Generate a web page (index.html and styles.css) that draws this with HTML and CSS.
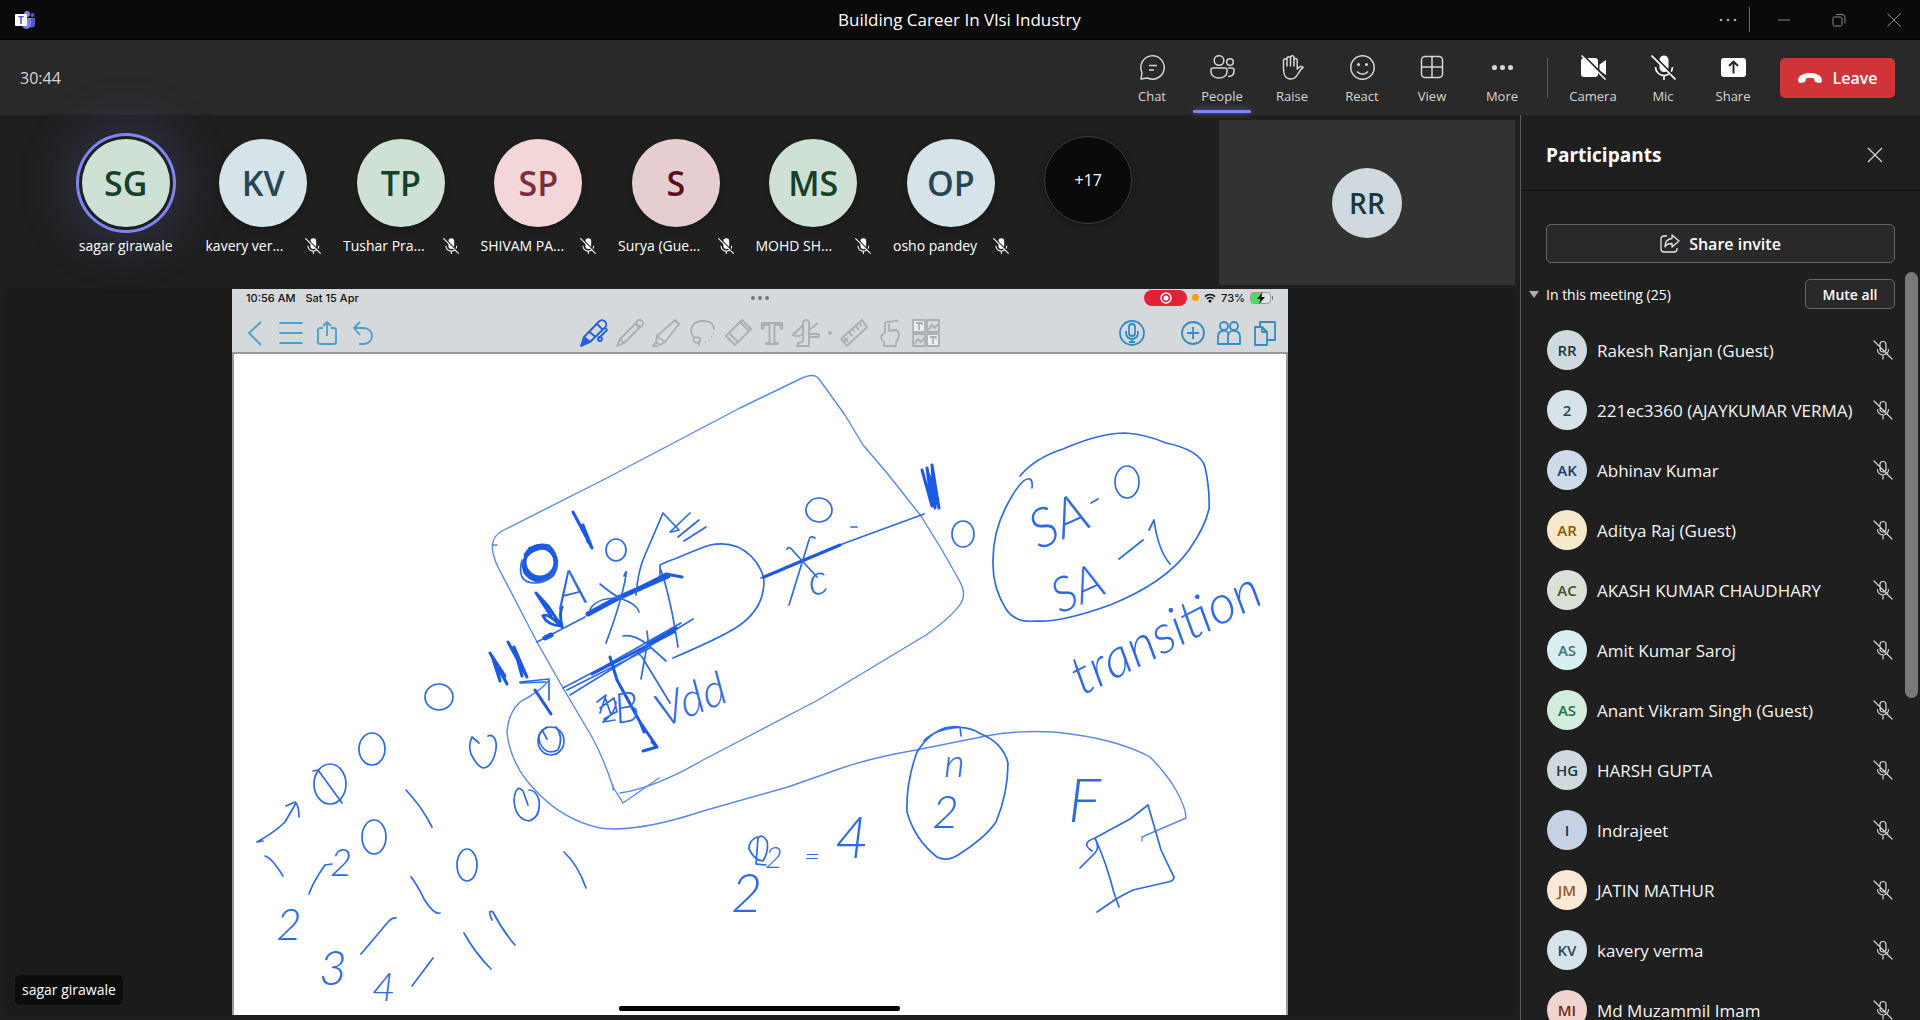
FILE: index.html
```html
<!DOCTYPE html>
<html lang="en">
<head>
    <meta charset="UTF-8">
    <meta name="viewport" content="width=device-width, initial-scale=1.0">
    <title>Building Career In Vlsi Industry</title>
    <link rel="stylesheet" href="styles.css">
</head>
<body>
    <svg class="sprite" aria-hidden="true">
      <symbol id="mic-off" viewBox="0 0 20 20">
        <path d="M7 5.5V4.5a3 3 0 0 1 6 0V9a3 3 0 0 1-6 0zM4.5 9.5a5.5 5.5 0 0 0 11 0M10 15v4M1 1l18 18" fill="none" stroke="currentColor" stroke-width="1.2" stroke-linecap="round" />
      </symbol>
      <symbol id="mic-off-filled" viewBox="0 0 25 25">
        <path d="M8.5 5a4.5 4.5 0 0 1 9 0v7.5a4.5 4.5 0 0 1-9 0z" fill="currentColor" />
        <path d="M4.5 12a8.5 8.5 0 0 0 17 0M13 20.5V25" fill="none" stroke="currentColor" stroke-width="1.6" />
        <path d="M2.5 .5l23 23" stroke="#232323" stroke-width="2" />
        <path d="M.5 .5l24 24" stroke="currentColor" stroke-width="1.6" />
      </symbol>
    </svg>

    <header class="titlebar">
      <svg class="logo" viewBox="0 0 20 18" aria-label="Teams">
        <circle cx="17.5" cy="4" r="2" fill="#5059c9" />
        <path d="M13 7h7v6a3.5 3.5 0 0 1-7 0z" fill="#5059c9" />
        <circle cx="12" cy="3" r="3" fill="#7b83eb" />
        <path d="M7 7h9v6a4.5 5 0 0 1-9 0z" fill="#7b83eb" />
        <rect y="3" width="12" height="12" rx="1" fill="#fff" />
        <text x="6" y="12.5" class="logo-letter">T</text>
      </svg>
      <h1 class="titlebar-title">Building Career In Vlsi Industry</h1>
      <div class="window-buttons">
        <button class="window-more" aria-label="Settings"><svg viewBox="0 0 20 20"><circle cx="3" cy="10" r="1.3" /><circle cx="10" cy="10" r="1.3" /><circle cx="17" cy="10" r="1.3" /></svg></button>
        <button aria-label="Minimize"><svg viewBox="0 0 20 20"><path d="M4 10h12" /></svg></button>
        <button aria-label="Restore"><svg viewBox="0 0 20 20"><rect x="4" y="7" width="9" height="9" rx="1.5" /><path d="M7 4.5h6a3 3 0 0 1 3 3v6" /></svg></button>
        <button aria-label="Close"><svg viewBox="0 0 20 20"><path d="M3.5 3.5l13 13M16.5 3.5l-13 13" /></svg></button>
      </div>
    </header>

    <nav class="toolbar">
      <span class="timer">30:44</span>
      <div class="tool-group">
        <button class="tool">
          <svg viewBox="0 0 25 25"><path d="M1 24l1-6.5A11.7 11.7 0 1 1 7.5 23zM9 10.5h8M9 15h5" /></svg>
          <span>Chat</span>
        </button>
        <button class="tool active">
          <svg viewBox="0 0 25 25"><circle cx="9" cy="5.5" r="4.8" /><circle cx="20" cy="7" r="3.3" /><path d="M3 13h12a2 2 0 0 1 2 2v2c0 4-4 6-8 6s-8-2-8-6v-2a2 2 0 0 1 2-2zM18 13h4a2 2 0 0 1 2 2v1c0 4-3 5.5-6 5.5" /></svg>
          <span>People</span>
        </button>
        <button class="tool">
          <svg viewBox="0 0 25 25"><path d="M3.500 13V5.500a1.700 1.700 0 0 1 3.500 0V11 3.500a1.700 1.700 0 0 1 3.500 0V11 2.500a1.700 1.700 0 0 1 3.500 0V11 5a1.600 1.600 0 0 1 3.200 0v9c2-2.500 5-3.500 6-1.500-2 1-3.500 3-5 6s-3.200 5.500-7.200 5.500c-6 0-7.500-4-7.500-11z" /></svg>
          <span>Raise</span>
        </button>
        <button class="tool">
          <svg viewBox="0 0 25 25"><circle cx="12.5" cy="12.5" r="11.7" /><path d="M7 16.5c3 3.5 8 3.5 11 0" /><circle class="solid" cx="8.5" cy="9.5" r=".8" /><circle class="solid" cx="16.5" cy="9.5" r=".8" /></svg>
          <span>React</span>
        </button>
        <button class="tool">
          <svg viewBox="0 0 25 25"><rect x="1.5" y="1.5" width="21" height="21" rx="3.5" /><path d="M12 1.5v21M1.500 12h21" /></svg>
          <span>View</span>
        </button>
        <button class="tool">
          <svg viewBox="0 0 25 25"><circle class="solid" cx="4.5" cy="12.5" r="1.8" /><circle class="solid" cx="12.5" cy="12.5" r="1.8" /><circle class="solid" cx="20.5" cy="12.5" r="1.8" /></svg>
          <span>More</span>
        </button>
      </div>
      <div class="tool-group devices">
        <button class="tool">
          <svg viewBox="0 0 25 25"><path class="fill" d="M3 3h11a3 3 0 0 1 3 3v13a3 3 0 0 1-3 3H3a3 3 0 0 1-3-3V6a3 3 0 0 1 3-3zM18.500 9.500L25 5v15l-6.500-4.500z" /><path class="cut" d="M2.500 .5l23 23" /><path class="white" d="M.5 .5l24 24" /></svg>
          <span>Camera</span>
        </button>
        <button class="tool">
          <svg class="bare"><use href="#mic-off-filled" /></svg>
          <span>Mic</span>
        </button>
        <button class="tool">
          <svg viewBox="0 0 25 25"><rect class="fill" y="3" width="25" height="19" rx="3" /><path class="dark" d="M12.5 18.5V7M8 11l4.500-4.500L17 11" /></svg>
          <span>Share</span>
        </button>
      </div>
      <button class="leave">
        <svg viewBox="0 0 24 12"><path d="M12 1c6 0 11 2.500 11.800 6 .4 2-.4 4.300-2.200 4L18 10.200c-1-.2-1.500-1-1.600-2l-.2-1.700c-3-1-5.400-1-8.400 0L7.600 8.200c-.1 1-.6 1.800-1.600 2l-3.600.8C.6 11.300-.2 9 .2 7 1 3.500 6 1 12 1z" /></svg>
        Leave
      </button>
    </nav>

    <div class="layout">
      <main class="meeting">
        <section class="strip">
          <ul class="people">
            <li class="person speaking"><span class="avatar green">SG</span><div class="label"><span>sagar girawale</span></div></li>
            <li class="person"><span class="avatar blue">KV</span><div class="label"><span>kavery ver...</span><svg><use href="#mic-off-filled" /></svg></div></li>
            <li class="person"><span class="avatar green">TP</span><div class="label"><span>Tushar Pra...</span><svg><use href="#mic-off-filled" /></svg></div></li>
            <li class="person"><span class="avatar pink">SP</span><div class="label"><span>SHIVAM PA...</span><svg><use href="#mic-off-filled" /></svg></div></li>
            <li class="person"><span class="avatar rose">S</span><div class="label"><span>Surya (Gue...</span><svg><use href="#mic-off-filled" /></svg></div></li>
            <li class="person"><span class="avatar green">MS</span><div class="label"><span>MOHD SH...</span><svg><use href="#mic-off-filled" /></svg></div></li>
            <li class="person"><span class="avatar blue">OP</span><div class="label"><span>osho pandey</span><svg><use href="#mic-off-filled" /></svg></div></li>
            <li class="person more"><button class="avatar">+17</button></li>
          </ul>
          <div class="self"><span class="avatar slate">RR</span></div>
        </section>

        <section class="stage">
          <div class="tablet">
            <div class="status">
              <div class="status-left"><span>10:56 AM</span><span>Sat 15 Apr</span></div>
              <svg class="dots" viewBox="0 0 20 6"><circle cx="3" cy="3" r="2" /><circle cx="10" cy="3" r="2" /><circle cx="17" cy="3" r="2" /></svg>
              <div class="status-right">
                <span class="recording"><svg viewBox="0 0 12 12"><circle cx="6" cy="6" r="5" fill="none" stroke="#fff" stroke-width="1.5" /><circle cx="6" cy="6" r="2.5" fill="#fff" /></svg></span>
                <span class="orange-dot"></span>
                <svg class="wifi" viewBox="0 0 13 10"><path d="M1 3.5c3-3 8-3 11 0M3 6c2-2 5-2 7 0" fill="none" stroke="#111" stroke-width="1.8" /><circle cx="6.5" cy="8.5" r="1.5" /></svg>
                <span>73%</span>
                <svg class="battery" viewBox="0 0 24 12"><rect x=".5" y=".5" width="20" height="11" rx="3" fill="#dfe3e4" stroke="#999" /><path d="M3.500 1H11v10H3.500A2.500 2.500 0 0 1 1 8.500v-5A2.500 2.500 0 0 1 3.500 1z" fill="#4cd964" /><path d="M12.500 0L7 7h3.500L9 12l6-7h-3.500z" fill="#111" /><path d="M22.500 4v4" stroke="#777" /></svg>
              </div>
            </div>

            <div class="note-tools">
              <div class="note-left">
                <button aria-label="Back"><svg viewBox="0 0 26 28"><path d="M19 3L7 14l12 12" /></svg></button>
                <button aria-label="Menu"><svg viewBox="0 0 26 28"><path d="M1.500 4h23M1.500 14h23M1.500 24h23" /></svg></button>
                <button aria-label="Export"><svg viewBox="0 0 26 28"><path d="M9 9H6a2 2 0 0 0-2 2v12a2 2 0 0 0 2 2h14a2 2 0 0 0 2-2V11a2 2 0 0 0-2-2h-3M13 17V3M9 7l4-4 4 4" /></svg></button>
                <button aria-label="Undo"><svg viewBox="0 0 26 28"><path d="M10 3L4 9l6 7M4 9h10a8 8 0 0 1 0 16H9" /></svg></button>
              </div>
              <div class="note-pens">
                <button class="selected" aria-label="Pen"><svg viewBox="0 0 28 28"><path d="M1 27l3-9L19 2.500a4 4 0 0 1 6 6L10 23zM4 18l6 5M9 12.500l6 5M17 5l5.500 5.500M25 8l2 3-8 8" /><path d="M2 26l3-6 4 3z" fill="#1f5fe0" /><circle cx="20" cy="20" r="2" /></svg></button>
                <button aria-label="Pencil"><svg viewBox="0 0 28 28"><path d="M1 27l3-7L20 4l4 4L8 24zM4 20l4 4" /><circle cx="23.5" cy="4.5" r="3.5" /></svg></button>
                <button aria-label="Highlighter"><svg viewBox="0 0 28 28"><path d="M5 17L23 1l4 4-14 18zM5 17l-1 6 4 3 5-3M4 23l-3 4h5" /></svg></button>
                <button aria-label="Lasso"><svg viewBox="0 0 28 28"><path d="M6 19C-1 9 6 2 15 2c8 0 11 4 11 8M6 19c2-2 8 0 6 3s-8 2-6-3zM11 23v4" /><path d="M26 10c0 7-6 13-12 14" stroke-dasharray="1 3" /></svg></button>
                <button aria-label="Eraser"><svg viewBox="0 0 28 28"><path d="M2 17L18 1l9 9-16 16zM5 14l9 9M16 3l9 9" /></svg></button>
                <button class="text-tool" aria-label="Text"><svg viewBox="0 0 24 28"><text x="12" y="25">T</text></svg></button>
                <button aria-label="Tools"><svg viewBox="0 0 28 28"><path d="M11 22V4a3 3 0 0 1 6 0v23H5c0-3 2-4 6-4M11 6L1 16c3 2 7 1 10-1M17 11l9-7M17 15h8c3 0 3 3 0 3h-8" /></svg></button>
                <i class="pen-dot"></i>
                <button aria-label="Ruler"><svg viewBox="0 0 28 28"><path d="M1 20L22 1l5 7L7 27zM9 13l3 4M12.500 10l2 3M16 7l3 4M19.500 4l2 3" /><circle cx="6" cy="21" r="1.5" /></svg></button>
                <button aria-label="Touch"><svg viewBox="0 0 28 28"><path d="M9 14V5c0-4 5-1 9-3 2-1 3-1 4 1M9 14c-5 2-5 6-1 9v4h12v-4c4-4 4-12-1-12l-6 1V5" /></svg></button>
                <button aria-label="Shapes"><svg viewBox="0 0 28 28"><path d="M1 1h12v12H1zM15 15h12v12H15z" fill="#eee" /><path d="M15 1h12v12H15zM1 15h12v12H1zM16 11l4-5 3 3 3-4M2 25l4-5 3 3 3-4M4 4h6v2M7 4v7M18 18h6v2M21 18v7" /></svg></button>
              </div>
              <div class="note-right">
                <button class="dictate" aria-label="Record audio"><svg viewBox="0 0 26 28"><circle cx="13" cy="14" r="12" /><path d="M10 8a3 3 0 0 1 6 0v6a3 3 0 0 1-6 0zM7 12v2a6 6 0 0 0 12 0v-2M13 20v3M10 23h6" /></svg></button>
                <button aria-label="Add"><svg viewBox="0 0 26 28"><circle cx="13" cy="14" r="11" /><path d="M13 8v12M7 14h12" /></svg></button>
                <button aria-label="Collaborate"><svg viewBox="0 0 26 28"><circle cx="8" cy="7" r="4" /><circle cx="18" cy="7" r="4" /><path d="M13 16c-1-6-11-6-11 2v7h10V16c1-6 12-6 12 2v7H12" /></svg></button>
                <button aria-label="Pages"><svg viewBox="0 0 26 28"><path d="M3 8h7l5 5v13H3zM10 8v5h5M8 8V3h15v18h-8" /></svg></button>
              </div>
            </div>

            <svg class="board" viewBox="232 354 1056 661" preserveAspectRatio="xMidYMin meet" role="img" aria-label="Shared whiteboard">
              <!-- package outline -->
              <g class="thin">
                <path d="M603 480L740 408L800 379Q814 372 819 379L845 415L863 445L887 473L921 516L942 550L959 580Q967 594 961 603Q953 616 926 635L818 700L703 760Q655 788 620 793" />
                <path d="M603 480L502 531Q490 537 493 553Q495 562 499 569L537 642L563 688L592 737Q603 757 613 787L623 803L659 778M492 545h5M613 785v5" />
                <path d="M549 680Q542 690 520 702Q508 713 507 733Q511 766 536 791Q563 820 600 828Q637 833 703 811L788 787L839 769Q870 758 916 750L986 736Q1015 730 1054 732Q1115 738 1150 757Q1166 773 1176 790Q1186 808 1186 818L1142 837v4" />
              </g>
              <!-- AND gate -->
              <path d="M660 575V565Q668 561 677 558Q703 547 710 545Q735 540 751 556Q764 570 764 583Q763 610 737 627Q722 637 673 658M661 570Q671 600 678 647" />
              <path d="M537 642L585 617M761 578L803 560L845 543L924 514M563 688L603 667L681 623M570 695L693 619M567 690L650 648M590 612L665 578" />
              <path class="thick" d="M545 638L551 635M588 614L618 598L668 576" />
              <path class="mid" d="M610 603L666 574L682 577M592 674L674 632M764 577L840 545M648 644L676 628" />
              <path d="M600 584Q613 595 622 599Q637 604 639 612M624 576q3-8 2-1Q622 600 606 643M590 610Q595 598 618 598M623 636Q633 634 647 644L666 661M647 631L648 640L641 679" />
              <path d="M787 549q2-4 7 3L817 577M815 538q-5-3-6 2L789 605M636 595Q638 570 645 555L663 513L679 530l-8 2M670 532L690 513M678 537L699 520M684 541L706 527M638 653L642 657L670 703" />
              <path class="mid" d="M610 657L617 680L640 722L657 747L643 751M640 722l4 10M652 742l5 5" />
              <!-- scribbled marks -->
              <ellipse class="mid" cx="540" cy="562" rx="15" ry="15" />
              <path class="mid" d="M525 555Q533 542 549 546Q562 560 553 575Q538 588 525 573Q520 560 531 552Q547 542 556 558M530 548Q520 562 528 574Q541 586 555 569Q558 551 541 547" />
              <path d="M522 560Q516 583 535 583Q553 582 557 563" />
              <path class="mid" d="M573 512L592 548L583 525L588 542M536 593L548 606L562 627M536 593L551 616M562 607q-3 6 0 20M543 616q4-4 18 10q-14-1-18-10M490 653L507 684L496 663L500 681L492 656L505 676M508 642L527 677L514 647L522 676M535 690L551 714" />
              <path d="M597 702L606 695L600 713M605 697L611 715M600 708L614 698L617 712M603 722Q616 712 616 702M603 722l12-2M604 719l12-7" />
              <path class="mid" d="M922 470L932 506L927 468L935 508L932 465L939 508L929 475L936 500" />
              <path d="M520 682L549 679V700M520 683L546 682M851 527h6" />
              <ellipse cx="616" cy="550" rx="10" ry="11" />
              <ellipse cx="551" cy="741" rx="13" ry="14" />
              <path d="M547 727Q536 733 540 743Q546 756 558 750Q564 737 556 727M542 730l5 9" />
              <ellipse cx="819" cy="510" rx="13" ry="12" />
              <ellipse cx="963" cy="534" rx="11" ry="13" />
              <ellipse cx="439" cy="697" rx="14" ry="13" />
              <ellipse cx="372" cy="749" rx="13" ry="16" />
              <ellipse cx="330" cy="784" rx="16" ry="20" />
              <ellipse cx="374" cy="837" rx="12" ry="17" />
              <ellipse cx="467" cy="865" rx="10" ry="16" />
              <path d="M479 743L472 737Q468 745 471 754Q478 768 484 768Q490 767 494 757Q498 746 495 739Q492 734 488 736M528 805L523 791Q516 783 514 800Q515 819 529 821Q541 817 539 800Q536 790 529 790" />
              <!-- truth table strokes -->
              <path d="M313 771L318 770L342 803M257 842Q275 832 285 822L296 803M286 806L295 802Q299 805 299 817M257 842l6-1M265 856Q272 858 283 876M406 790Q422 807 432 827M309 894Q313 882 325 865M325 865l7-1M411 877Q418 886 424 899Q434 915 440 913M361 954L388 922Q393 917 396 918M564 852Q578 865 586 888M464 933Q475 953 491 969M492 920Q487 909 493 912Q502 930 515 945M412 986L433 958" />
              <!-- stuck-at bubble -->
              <path d="M1020 476Q1035 458 1063 449Q1100 433 1125 433Q1145 434 1166 443Q1200 450 1205 467Q1210 490 1209 509Q1205 527 1189 550Q1165 583 1110 605Q1060 623 1035 621Q1015 623 1006 609Q992 587 993 560Q993 532 1006 507Q1022 476 1030 479Q1033 481 1032 488M1091 503l7-4M1119 559L1143 540M1149 530l5-10Q1158 550 1170 564" />
              <ellipse cx="1127" cy="482" rx="12" ry="16" />
              <!-- power of two bubble, flip-flop box -->
              <path d="M961 736L960 727Q935 724 917 752Q906 782 907 812Q915 840 937 857Q947 862 958 855Q985 838 996 822Q1008 793 1008 763Q1003 743 981 734Q966 724 947 729Q930 733 924 741" />
              <path d="M1095 838L1130 819L1148 805L1161 850Q1168 865 1174 877Q1174 881 1168 882L1133 890Q1123 895 1116 899L1097 912M1096 840Q1107 865 1114 893L1119 907M1092 851Q1080 843 1095 838Q1100 848 1095 853L1080 868" />
              <path d="M757 837q-8 3-8 12q6 12 14 12q6-10 4-20q-5-8-9-3l-2 26l10 1" />

              <g class="ink-text">
                <text x="560" y="609" font-size="50" transform="rotate(-14 560 609)">A</text>
                <text x="617" y="724" font-size="42" transform="rotate(-10 617 724)">B</text>
                <text x="663" y="728" font-size="46" transform="rotate(-22 663 728)">Vdd</text>
                <text x="811" y="596" font-size="42" transform="rotate(-12 811 596)">c</text>
                <text x="1039" y="550" font-size="54" transform="rotate(-24 1039 550)">SA</text>
                <text x="1060" y="614" font-size="48" transform="rotate(-24 1060 614)">SA</text>
                <text x="1082" y="696" font-size="54" transform="rotate(-27 1082 696)">transition</text>
                <text x="1068" y="822" font-size="62">F</text>
                <text x="944" y="777" font-size="40">n</text>
                <text x="932" y="828" font-size="46">2</text>
                <text x="731" y="912" font-size="54">2</text>
                <text x="765" y="868" font-size="30">2</text>
                <text x="804" y="866" font-size="28">=</text>
                <text x="835" y="858" font-size="58">4</text>
                <text x="330" y="876" font-size="38">2</text>
                <text x="276" y="940" font-size="44">2</text>
                <text x="319" y="985" font-size="48">3</text>
                <text x="372" y="1001" font-size="40">4</text>
              </g>
              <rect class="home" x="619" y="1006" width="281" height="5" rx="2" />
            </svg>
          </div>
          <span class="presenter">sagar girawale</span>
        </section>
      </main>

      <aside class="panel">
        <div class="panel-head">
          <h2>Participants</h2>
          <button aria-label="Close panel"><svg viewBox="0 0 16 16"><path d="M1 1l14 14M15 1L1 15" /></svg></button>
        </div>
        <div class="panel-body">
          <button class="invite">
            <svg viewBox="0 0 20 20"><path d="M7 2H4a3 3 0 0 0-3 3v10a3 3 0 0 0 3 3h10a3 3 0 0 0 3-3v-1M12 1l7 6-7 6V9.500c-4 0-6 1-7 3.500 0-5 2-8 7-8.500z" /></svg>
            Share invite
          </button>
          <div class="section-head">
            <button class="collapse"><i></i>In this meeting (25)</button>
            <button class="mute-all">Mute all</button>
          </div>
          <ul class="roster">
            <li><span class="avatar slate">RR</span><span class="name">Rakesh Ranjan (Guest)</span><svg><use href="#mic-off" /></svg></li>
            <li><span class="avatar blue">2</span><span class="name">221ec3360 (AJAYKUMAR VERMA)</span><svg><use href="#mic-off" /></svg></li>
            <li><span class="avatar navy">AK</span><span class="name">Abhinav Kumar</span><svg><use href="#mic-off" /></svg></li>
            <li><span class="avatar gold">AR</span><span class="name">Aditya Raj (Guest)</span><svg><use href="#mic-off" /></svg></li>
            <li><span class="avatar olive">AC</span><span class="name">AKASH KUMAR CHAUDHARY</span><svg><use href="#mic-off" /></svg></li>
            <li><span class="avatar teal">AS</span><span class="name">Amit Kumar Saroj</span><svg><use href="#mic-off" /></svg></li>
            <li><span class="avatar mint">AS</span><span class="name">Anant Vikram Singh (Guest)</span><svg><use href="#mic-off" /></svg></li>
            <li><span class="avatar slate">HG</span><span class="name">HARSH GUPTA</span><svg><use href="#mic-off" /></svg></li>
            <li><span class="avatar royal">I</span><span class="name">Indrajeet</span><svg><use href="#mic-off" /></svg></li>
            <li><span class="avatar peach">JM</span><span class="name">JATIN MATHUR</span><svg><use href="#mic-off" /></svg></li>
            <li><span class="avatar blue">KV</span><span class="name">kavery verma</span><svg><use href="#mic-off" /></svg></li>
            <li><span class="avatar brick">MI</span><span class="name">Md Muzammil Imam</span><svg><use href="#mic-off" /></svg></li>
          </ul>
          <div class="scroll-thumb"></div>
        </div>
      </aside>
    </div>
</body>
</html>
```

FILE: styles.css
```css
* {
  box-sizing: border-box;
}
body {
  height: 100vh;
  margin: 0;
  display: flex;
  flex-direction: column;
  overflow: hidden;
  background: #1f1f1f;
  color: #fff;
  font-family: "Open Sans", "Noto Sans", sans-serif;
  font-size: 16px;
}
button {
  padding: 0;
  border: none;
  background: none;
  color: inherit;
  font: inherit;
  cursor: pointer;
}
ul {
  margin: 0;
  padding: 0;
  list-style: none;
}
h1, h2 {
  margin: 0;
}
svg {
  display: block;
  flex: none;
}
.sprite {
  position: absolute;
  width: 0;
  height: 0;
}

/* title bar */
.titlebar {
  flex: none;
  height: 40px;
  padding: 0 16px 0 15px;
  display: grid;
  grid-template-columns: 1fr auto 1fr;
  align-items: center;
  background: #0a0a0a;
  border-bottom: 1px solid #000;
}
.logo {
  width: 20px;
  height: 18px;
}
.logo-letter {
  font-size: 10px;
  font-weight: 700;
  fill: #4b53bc;
  text-anchor: middle;
}
.titlebar-title {
  font-size: 17px;
  font-weight: 400;
}
.window-buttons {
  display: flex;
  justify-content: flex-end;
  gap: 35px;
  color: #8a8a8a;
}
.window-buttons button {
  width: 20px;
  height: 25px;
}
.window-buttons svg {
  width: 20px;
  fill: none;
  stroke: currentColor;
}
.window-buttons .window-more {
  width: 32px;
  margin-right: -11px;
  border-right: 1px solid #666;
}
.window-more svg {
  fill: #aaa;
  stroke: none;
}

/* meeting controls */
.toolbar {
  flex: none;
  height: 75px;
  padding: 0 25px 0 20px;
  display: flex;
  align-items: center;
  background: #292929;
}
.timer {
  margin-right: auto;
  color: #d6d6d6;
}
.tool-group {
  display: flex;
  height: 100%;
}
.tool {
  position: relative;
  width: 70px;
  padding-top: 5px;
  display: flex;
  flex-direction: column;
  align-items: center;
  justify-content: center;
  gap: 6px;
  color: #d6d6d6;
  font-size: 13px;
  line-height: 20px;
}
.tool svg {
  width: 25px;
  height: 25px;
  fill: none;
  stroke: #d6d6d6;
  stroke-width: 1.5;
  stroke-linejoin: round;
}
.tool svg.bare {
  stroke: none;
  color: #fff;
}
.tool .solid {
  fill: #d6d6d6;
}
.tool .fill {
  fill: #fff;
  stroke: none;
}
.tool .cut {
  stroke: #292929;
  stroke-width: 2;
}
.tool .white {
  stroke: #fff;
}
.tool .dark {
  stroke: #292929;
  stroke-width: 2;
}
.tool.active::after {
  content: "";
  position: absolute;
  left: 6px;
  right: 6px;
  bottom: 2px;
  height: 3px;
  border-radius: 2px;
  background: #7f85f5;
  box-shadow: 0 0 6px #5b5fc7;
}
.devices {
  position: relative;
  margin: 0 12px 0 10px;
  padding-left: 11px;
}
.devices::before {
  content: "";
  position: absolute;
  left: 0;
  top: 18px;
  bottom: 17px;
  width: 1px;
  background: #5c5c5c;
}
.leave {
  width: 115px;
  height: 40px;
  display: flex;
  align-items: center;
  justify-content: center;
  gap: 11px;
  border-radius: 5px;
  background: #d13438;
  font-weight: 600;
}
.leave svg {
  width: 24px;
  height: 12px;
  fill: #fff;
}

.layout {
  flex: 1;
  min-height: 0;
  display: flex;
}
.meeting {
  flex: 1;
  min-width: 0;
  padding: 5px;
  display: flex;
  flex-direction: column;
  gap: 4px;
}

/* avatars */
.avatar {
  flex: none;
  width: 40px;
  height: 40px;
  display: flex;
  align-items: center;
  justify-content: center;
  border-radius: 50%;
  font-size: 15px;
  font-weight: 600;
}
.green { background: #cfe0d5; color: #17402b; }
.blue { background: #d6e3e9; color: #264653; }
.pink { background: #f3d6d8; color: #7a2e3a; }
.rose { background: #e5cdd0; color: #5a0f18; }
.slate { background: #cfd9de; color: #17383f; }
.navy { background: #cfdaeb; color: #1b3a66; }
.gold { background: #f8e8cc; color: #835b00; }
.olive { background: #dae0d6; color: #3d4f2d; }
.teal { background: #daeff2; color: #3b7377; }
.mint { background: #d2ecdd; color: #256e46; }
.royal { background: #c6d1e6; color: #11305e; }
.peach { background: #fce9d6; color: #8f5a24; }
.brick { background: #f1d4cd; color: #7a2417; }

.strip {
  display: flex;
  height: 165px;
}
.people {
  flex: 1;
  padding: 0 62px 0 52px;
  display: grid;
  grid-template-columns: repeat(8, 1fr);
}
.person {
  padding: 19px 11px 0;
}
.person .avatar {
  width: 88px;
  height: 88px;
  margin: 0 auto 8px;
  font-size: 34px;
  box-shadow: 0 2px 5px #161616;
}
.person.speaking .avatar {
  box-shadow: 0 0 0 3px #1f1f1f, 0 0 0 6px #7f85f5, 0 0 50px 20px rgba(127, 133, 245, 0.15);
}
.speaking .label {
  justify-content: center;
}
.person.more {
  padding-top: 16px;
}
.person.more .avatar {
  border: 1px solid #3d3d3d;
  background: #0a0a0a;
  font-size: 16px;
  font-weight: 400;
}
.label {
  display: flex;
  align-items: center;
  justify-content: space-between;
  font-size: 14px;
  line-height: 22px;
  white-space: nowrap;
}
.label svg {
  width: 16px;
  height: 16px;
}
.self {
  width: 296px;
  display: flex;
  align-items: center;
  justify-content: center;
  background: #323232;
}
.self .avatar {
  width: 70px;
  height: 70px;
  font-size: 28px;
}

/* shared tablet screen */
.stage {
  position: relative;
  flex: 1;
  min-height: 0;
  display: flex;
  justify-content: center;
  background: #1b1b1b;
}
.tablet {
  height: 100%;
  aspect-ratio: 1056 / 726;
  display: flex;
  flex-direction: column;
  background: #d5d9dc;
  color: #111;
}
.status {
  padding: 0 14px;
  height: 17px;
  display: grid;
  grid-template-columns: 1fr auto 1fr;
  align-items: center;
  font-family: Inter, sans-serif;
  font-size: 11px;
  font-weight: 500;
}
.status-left {
  display: flex;
  gap: 10px;
}
.dots {
  width: 20px;
  height: 6px;
  fill: #777;
}
.status-right {
  display: flex;
  align-items: center;
  justify-content: flex-end;
  gap: 5px;
}
.recording {
  width: 43px;
  height: 16px;
  display: flex;
  align-items: center;
  justify-content: center;
  border-radius: 8px;
  background: #e22134;
}
.recording svg {
  width: 12px;
  height: 12px;
}
.orange-dot {
  width: 7px;
  height: 7px;
  border-radius: 50%;
  background: #f39c12;
}
.wifi {
  width: 12px;
  height: 10px;
}
.battery {
  width: 24px;
  height: 12px;
}
.note-tools {
  height: 48px;
  padding: 13px 10px 0;
  display: grid;
  grid-template-columns: 1fr auto 1fr;
  align-items: start;
  border-bottom: 2px solid #999;
}
.note-left, .note-pens, .note-right {
  display: flex;
  align-items: center;
}
.note-left, .note-right {
  gap: 10px;
}
.note-right {
  justify-content: flex-end;
}
.note-pens {
  gap: 8px;
}
.note-tools svg {
  width: 28px;
  height: 28px;
  fill: none;
  stroke: #acafb1;
  stroke-width: 1.8;
  stroke-linejoin: round;
}
.note-left svg, .note-right svg {
  width: 26px;
  stroke: #4a9fcb;
}
.note-right svg {
  stroke: #2f8dc4;
}
.note-pens .selected svg {
  stroke: #1f5fe0;
}
.note-pens .text-tool svg {
  width: 24px;
}
.text-tool text {
  font-family: "Liberation Serif", serif;
  font-size: 32px;
  font-weight: 700;
  text-anchor: middle;
}
.pen-dot {
  width: 4px;
  height: 4px;
  border-radius: 50%;
  background: #acafb1;
}
.dictate {
  margin-right: 25px;
}
.board {
  flex: 1;
  min-height: 0;
  width: 100%;
  background: #fff;
  box-shadow: inset 2px 0 #999, inset -2px 0 #999;
  fill: none;
  stroke: #2e6ae6;
  stroke-width: 1.7;
  stroke-linecap: round;
  stroke-linejoin: round;
}
.board .thin {
  stroke: #5a88ea;
  stroke-width: 1.4;
}
.board .mid {
  stroke: #1c5ae4;
  stroke-width: 3;
}
.board .thick {
  stroke: #1c5ae4;
  stroke-width: 5;
}
.board .home {
  fill: #000;
  stroke: none;
}
.ink-text {
  font-family: Lato, sans-serif;
  font-style: italic;
  font-weight: 300;
  fill: #2e6ae6;
  stroke: none;
}
.presenter {
  position: absolute;
  left: 10px;
  bottom: 10px;
  padding: 4px 7px;
  border-radius: 5px;
  background: #0c0c0c;
  font-size: 14px;
  line-height: 22px;
}

/* participants panel */
.panel {
  flex: none;
  width: 400px;
  display: flex;
  flex-direction: column;
  border-left: 1px solid #5a5a5a;
}
.panel-head {
  flex: none;
  height: 76px;
  padding: 5px 37px 0 25px;
  display: flex;
  align-items: center;
  justify-content: space-between;
  border-bottom: 1px solid #0d0d0d;
}
.panel-head h2 {
  font-size: 19px;
  font-weight: 700;
}
.panel-head svg {
  width: 16px;
  height: 16px;
  stroke: #d6d6d6;
  stroke-width: 1.3;
}
.panel-body {
  position: relative;
  flex: 1;
  min-height: 0;
  padding: 33px 25px 0;
  overflow: hidden;
}
.invite {
  width: 100%;
  height: 39px;
  display: flex;
  align-items: center;
  justify-content: center;
  gap: 9px;
  border: 1px solid #666;
  border-radius: 5px;
  background: #292929;
  font-weight: 600;
}
.invite svg {
  width: 20px;
  height: 20px;
  fill: none;
  stroke: #e6e6e6;
  stroke-width: 1.3;
  stroke-linejoin: round;
}
.section-head {
  margin: 16px 0 11px -17px;
  display: flex;
  align-items: center;
  justify-content: space-between;
}
.collapse {
  display: flex;
  align-items: center;
  gap: 7px;
  font-size: 14px;
}
.collapse i {
  border: 5px solid transparent;
  border-top: 7px solid #adadad;
  border-bottom: 0;
}
.mute-all {
  width: 90px;
  height: 30px;
  border: 1px solid #666;
  border-radius: 5px;
  background: #292929;
  font-size: 14px;
  font-weight: 600;
}
.roster li {
  height: 60px;
  padding-left: 1px;
  display: flex;
  align-items: center;
  gap: 10px;
}
.roster .name {
  flex: 1;
  color: #f5f5f5;
  font-size: 17px;
  white-space: nowrap;
}
.roster svg {
  width: 20px;
  height: 20px;
  margin-right: 2px;
  color: #d6d6d6;
}
.scroll-thumb {
  position: absolute;
  top: 81px;
  right: 2px;
  width: 13px;
  height: 426px;
  border-radius: 7px;
  background: #797979;
}
```
